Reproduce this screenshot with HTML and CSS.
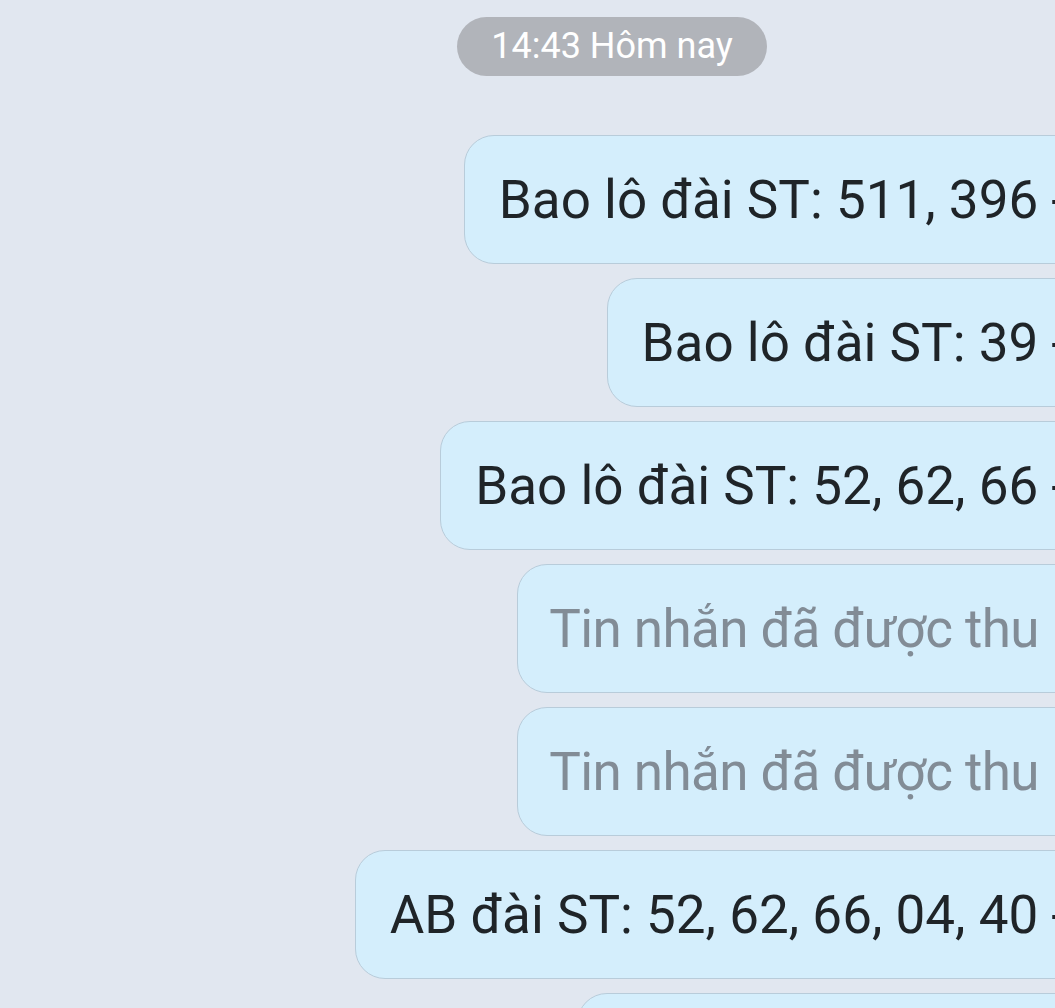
FILE: index.html
```html
<!DOCTYPE html>
<html lang="vi">
<head>
    <meta charset="UTF-8">
    <meta name="viewport" content="width=device-width, initial-scale=1.0">
    <title>Tin nhắn</title>
    <link rel="stylesheet" href="styles.css">
</head>
<body>

    <div class="chat">
        <div class="time-row">
            <span class="time-pill">14:43 Hôm nay</span>
        </div>

        <div class="bubble">Bao lô đài ST: 511, 396 - 10n</div>
        <div class="bubble">Bao lô đài ST: 39 - 10n</div>
        <div class="bubble">Bao lô đài ST: 52, 62, 66 - 10n</div>
        <div class="bubble recalled">Tin nhắn đã được thu hồi</div>
        <div class="bubble recalled">Tin nhắn đã được thu hồi</div>
        <div class="bubble">AB đài ST: 52, 62, 66, 04, 40 - 10n</div>
        <div class="bubble">Bao lô đài ST: 404 - 10n</div>
    </div>

</body>
</html>
```
FILE: styles.css
```css
body {
    margin: 0;
    background-color: #e1e7f0;
    font-family: Roboto, 'Noto Sans', sans-serif;
    color: #1f2428;
    overflow: hidden;
    height: 100vh;
}

/* the conversation is wider than the window, right side is cut off */
.chat {
    width: 1224px;
    padding: 17px 19px 0 0;
    box-sizing: border-box;
    display: flex;
    flex-direction: column;
    align-items: flex-end;
    gap: 14px;
}

.time-row {
    align-self: stretch;
    display: flex;
    justify-content: center;
    padding-left: 19px;
    margin-bottom: 45px;
}

.time-pill {
    background-color: #b1b4ba;
    color: #fff;
    font-size: 36px;
    line-height: 41px;
    padding: 9px 34px;
    border-radius: 30px;
}

.bubble {
    background-color: #d4eefc;
    border: 1px solid #b8ccda;
    border-radius: 30px;
    padding: 33px 36px 32px 34px;
    font-size: 53px;
    white-space: nowrap;
}

.bubble.recalled {
    color: #828c96;
    letter-spacing: -0.6px;
    padding-left: 31px;
    padding-right: 82px;
}
```
